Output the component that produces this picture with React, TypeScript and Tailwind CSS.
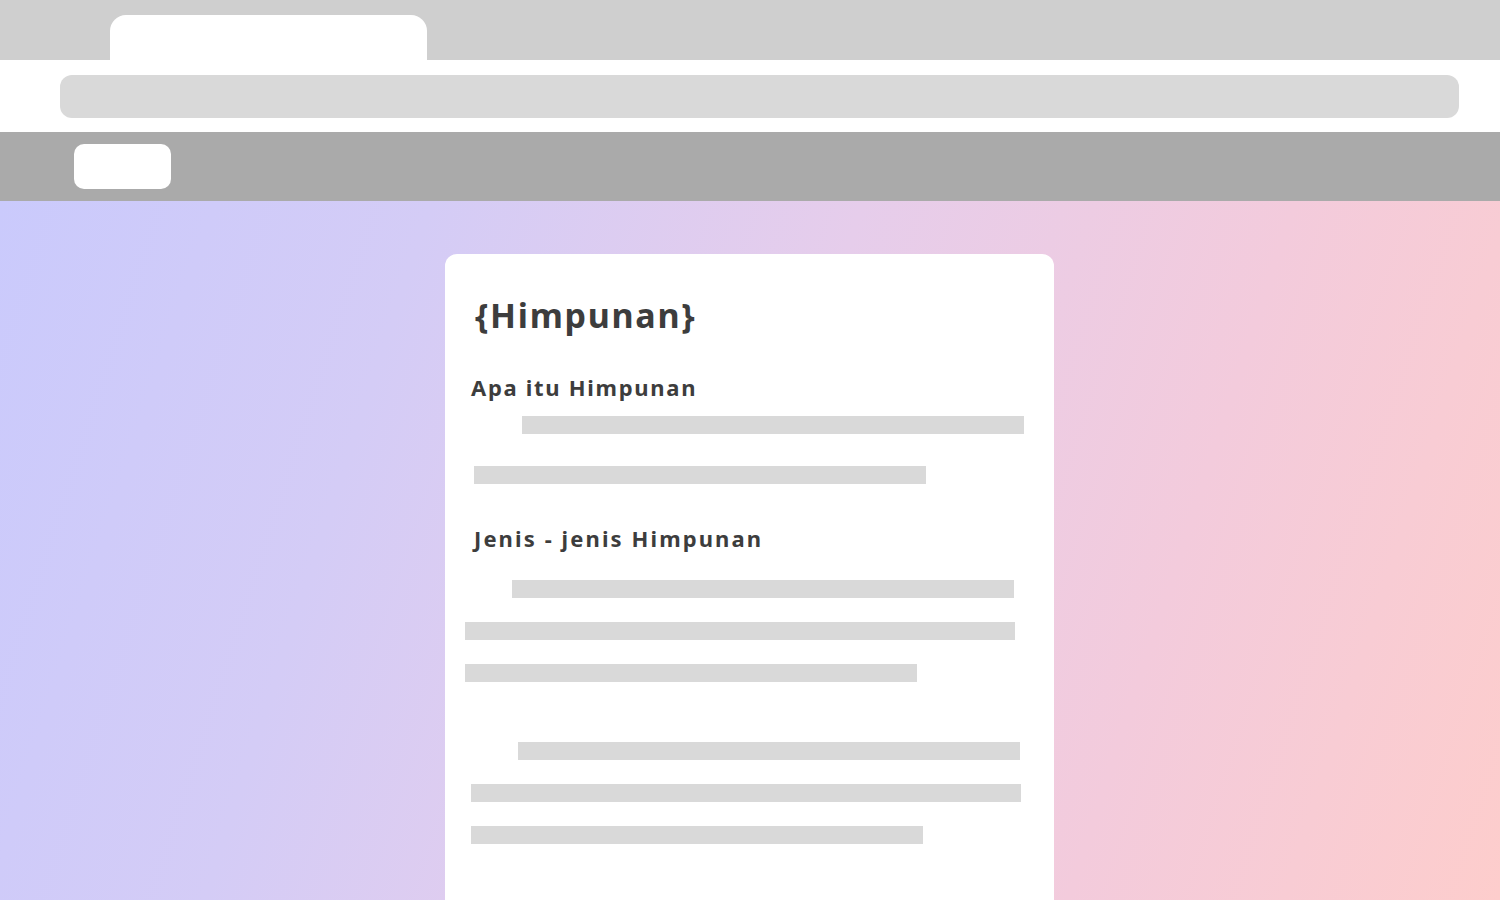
const Bar = ({ className }: { className: string }) => (
  <div className={`h-[18px] bg-[#d9d9d9] ${className}`} />
);

export default function App() {
  return (
    <div className="flex h-[900px] w-[1500px] flex-col overflow-hidden font-['Noto_Sans',sans-serif] text-[#3d3d3d]">
      {/* tab strip */}
      <div className="flex h-[60px] shrink-0 items-end bg-[#cfcfcf] pl-[110px]">
        <div className="h-[45px] w-[317px] rounded-t-[16px] bg-white" />
      </div>

      {/* address bar */}
      <div className="flex h-[72px] shrink-0 items-center bg-white pl-[60px]">
        <div className="h-[43px] w-[1399px] rounded-[12px] bg-[#d9d9d9]" />
      </div>

      {/* nav bar */}
      <div className="flex h-[69px] shrink-0 items-center bg-[#aaaaaa] pl-[74px]">
        <div className="h-[45px] w-[97px] rounded-[10px] bg-white" />
      </div>

      {/* content */}
      <div className="flex flex-1 bg-[linear-gradient(108deg,#cacafc_0%,#d4ccf6_25%,#e6cdeb_50%,#f3cbdc_75%,#fdcdcc_100%)] pl-[445px] pt-[53px]">
        <div className="flex w-[609px] flex-col rounded-t-[12px] bg-white pb-10">
          <h1 className="ml-[30px] mt-[41px] text-[34px] font-bold leading-[40px] tracking-[1.7px]">
            {"{Himpunan}"}
          </h1>
          <h2 className="ml-[26px] mt-[38px] text-[22px] font-bold leading-[28px] tracking-[1.7px]">
            Apa itu Himpunan
          </h2>
          <Bar className="ml-[77px] mt-[15px] w-[502px]" />
          <Bar className="ml-[29px] mt-[32px] w-[452px]" />

          <h2 className="ml-[29px] mt-[40px] text-[22px] font-bold leading-[28px] tracking-[2.1px]">
            Jenis - jenis Himpunan
          </h2>
          <Bar className="ml-[67px] mt-[28px] w-[502px]" />
          <Bar className="ml-[20px] mt-[24px] w-[550px]" />
          <Bar className="ml-[20px] mt-[24px] w-[452px]" />

          <Bar className="ml-[73px] mt-[60px] w-[502px]" />
          <Bar className="ml-[26px] mt-[24px] w-[550px]" />
          <Bar className="ml-[26px] mt-[24px] w-[452px]" />
        </div>
      </div>
    </div>
  );
}
